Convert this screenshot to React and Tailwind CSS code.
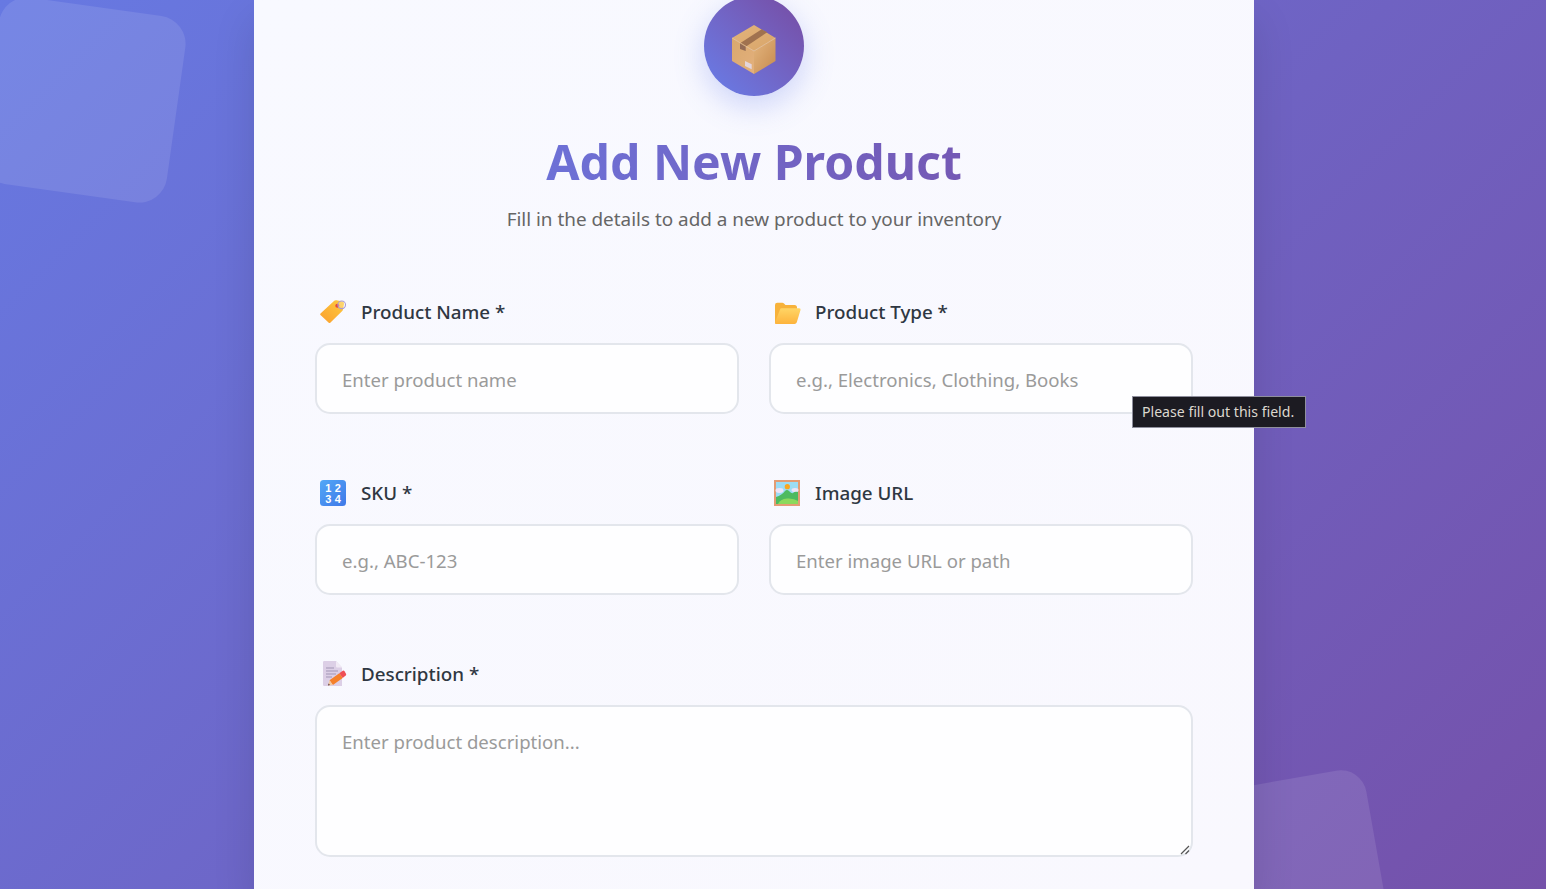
import React from "react";

const Tag = () => (
  <svg viewBox="0 0 28 28" className="w-7 h-7">
    <defs><linearGradient id="tg" x1="0" y1="1" x2="1" y2="0"><stop offset="0" stopColor="#fb9f2e"/><stop offset="1" stopColor="#fdcb3f"/></linearGradient></defs>
    <path d="M1.500 15.500 15 3q1-1 2.500-.7l6 1.200q1.800.4 1.500 2.500l-1 5.500q-.2 1-1 1.800L11.500 24.500q-1 1-2 0L1.500 17q-.8-.8 0-1.500Z" fill="url(#tg)"/>
    <circle cx="18.300" cy="7.700" r="2" fill="#e5483a"/>
    <circle cx="22.700" cy="6.800" r="3.800" fill="#fff" fillOpacity=".25" stroke="#a99ad2" strokeWidth="1.100"/>
  </svg>
);
const Folder = () => (
  <svg viewBox="0 0 28 28" className="w-7 h-7">
    <defs><linearGradient id="fd" x1="0" y1="0" x2="0" y2="1"><stop offset="0" stopColor="#ffd565"/><stop offset="1" stopColor="#fdb33c"/></linearGradient></defs>
    <path d="M2 7q0-2.300 2.300-2.300h5q1 0 1.700.8l1.500 1.500h9q2.500 0 2.500 2.500v3H2Z" fill="#f7b23b"/>
    <path d="M2 8h6v18H3.500Q2 26 2 24.500Z" fill="#f7b23b"/>
    <path d="M7 11.500q.3-1.200 1.500-1.200h17.700q1.800 0 1.300 1.700l-3.700 12.200q-.5 1.800-2.300 1.800H3.500q-2 0-1.400-1.800Z" fill="url(#fd)"/>
  </svg>
);
const Keycap = () => (
  <svg viewBox="0 0 28 28" className="w-7 h-7">
    <defs><linearGradient id="kc" x1="0" y1="0" x2="1" y2="1"><stop offset="0" stopColor="#52a8f7"/><stop offset="1" stopColor="#3f78e8"/></linearGradient></defs>
    <rect x="1" y="1" width="26" height="26" rx="3.500" fill="url(#kc)"/>
    <g fill="#fff" fontFamily="'Liberation Sans', sans-serif" fontSize="11" fontWeight="700" textAnchor="middle">
      <text x="9.300" y="12.800">1</text><text x="18.700" y="12.800">2</text>
      <text x="9.300" y="23.800">3</text><text x="18.700" y="23.800">4</text>
    </g>
  </svg>
);
const Picture = () => (
  <svg viewBox="0 0 28 28" className="w-7 h-7">
    <rect x="1" y="1" width="26" height="26" fill="#e39c74"/>
    <rect x="3" y="3" width="22" height="22" fill="#9bdcf5"/>
    <ellipse cx="6.500" cy="11.500" rx="4" ry="2.400" fill="#eee3f7"/>
    <ellipse cx="22" cy="11" rx="3.500" ry="2" fill="#eee3f7"/>
    <circle cx="14.300" cy="7.700" r="2.600" fill="#f9a61f"/>
    <path d="M3 18q6-2 9-6 2-2 4 0 3 3 4 2 2-2 5-1v12H3Z" fill="#4dba60"/>
    <path d="M5 25q2-5 9-5.500 7-.5 11 2.500v3Z" fill="#8bd95c"/>
  </svg>
);
const Memo = () => (
  <svg viewBox="0 0 28 28" className="w-7 h-7">
    <path d="M4 2.200Q4 1 5.200 1H17l6 6.500V26H5.200Q4 26 4 24.800Z" fill="#dccfe6"/>
    <path d="M17 1l6 6.500h-5q-1 0-1-1Z" fill="#f1eaf5"/>
    <path d="M7 8h8M7 11h12M7 14h10M7 17h6" stroke="#a195b5" strokeWidth="1"/>
    <path d="M10.500 20.300 20.300 13.300 23.700 18.100 13.900 25.100Z" fill="#f5802a"/>
    <path d="M20.300 13.300 23.800 10.800Q24.800 10.300 25.500 11.200L27 13.700Q27.500 14.800 26.700 15.600L23.700 18.100Z" fill="#ef4f55"/>
    <path d="M9 25.500 10.500 20.300 13.900 25.100Z" fill="#f3c9a0"/>
    <path d="M9 25.500 9.600 23.400 11 25.100Z" fill="#5b3a3a"/>
  </svg>
);
const Box = () => (
  <svg viewBox="0 0 48 52" className="w-12 h-[52px] mt-2">
    <defs>
      <linearGradient id="bt" x1="0" y1="0" x2="1" y2="1"><stop offset="0" stopColor="#e2b47c"/><stop offset="1" stopColor="#d9a569"/></linearGradient>
      <linearGradient id="bl" x1="0" y1="0" x2="1" y2="1"><stop offset="0" stopColor="#d9a86e"/><stop offset="1" stopColor="#e3b07c"/></linearGradient>
      <linearGradient id="br" x1="0" y1="0" x2="1" y2="1"><stop offset="0" stopColor="#e4b67f"/><stop offset="1" stopColor="#c68a4e"/></linearGradient>
    </defs>
    <path d="M24 1 45.500 14 24 27 2 14Z" fill="url(#bt)"/>
    <path d="M2 14 24 27V50L2 37Z" fill="url(#bl)"/>
    <path d="M45.500 14 24 27V50L45.500 37Z" fill="url(#br)"/>
    <path d="M10 19.300 31.700 5.300 37.300 8.300 15.700 22.700Z" fill="#a0724f"/>
    <path d="M10 19.300 15.700 22.700V27L10 25Z" fill="#936b55"/>
    <path d="M15 37 21.700 40.300V45.300L15 42Z" fill="#e3d5dc"/>
    <path d="M2 14 24 27 45.500 14" fill="none" stroke="#f0cf9f" strokeWidth=".7"/>
  </svg>
);

const Label = ({ icon, text }) => (
  <label className="flex items-center h-7 mb-[17px] text-[18.800px] font-medium text-[#2f3742]">
    <span className="w-[46px] pl-1 shrink-0 flex">{icon}</span>
    {text}
  </label>
);

const field = "block w-full border-2 border-[#e3e6ec] rounded-[15px] bg-white/80 px-[25px] text-[18.600px] text-[#333] placeholder:text-[#9a9a9a] outline-none";

export default function App() {
  return (
    <div className="relative h-[889px] overflow-hidden bg-[linear-gradient(135deg,#6779e2_0%,#7551aa_100%)] font-['Noto_Sans','Open_Sans',sans-serif]">
      <div className="absolute left-[-11px] top-[6px] w-[188px] h-[188px] rounded-[28px] rotate-[8deg] bg-white/10" />
      <div className="absolute left-[1226px] top-[778px] w-[150px] h-[150px] rounded-[26px] -rotate-[10deg] bg-white/10" />

      <main className="relative ml-[254px] w-[1000px] h-[889px] px-[61px] bg-linear-to-br from-[#f8f9ff] to-[#f9f8fe] shadow-[0_20px_40px_rgba(0,0,0,0.12)]">
        <div className="flex flex-col items-center">
          <div className="mt-[-4px] w-[100px] h-[100px] rounded-full bg-linear-to-tr from-[#667eea] to-[#764ba2] shadow-[0_10px_30px_rgba(102,126,234,0.3)] flex items-center justify-center">
            <Box />
          </div>
          <h1 className="mt-[36px] mb-px w-full text-center h-[58px] leading-[58px] text-[48.200px] font-bold bg-linear-to-r from-[#667eea] to-[#764ba2] bg-clip-text text-transparent">Add New Product</h1>
          <p className="mt-[14px] h-7 leading-7 text-[18.900px] text-[#666]">Fill in the details to add a new product to your inventory</p>
        </div>

        <form className="mt-[65px] grid grid-cols-2 gap-x-[30px] gap-y-[65px]">
          <div>
            <Label icon={<Tag />} text="Product Name *" />
            <input className={`${field} h-[71px] pt-[2px]`} placeholder="Enter product name" />
          </div>
          <div>
            <Label icon={<Folder />} text="Product Type *" />
            <input className={`${field} h-[71px] pt-[2px]`} placeholder="e.g., Electronics, Clothing, Books" />
          </div>
          <div>
            <Label icon={<Keycap />} text="SKU *" />
            <input className={`${field} h-[71px] pt-[2px]`} placeholder="e.g., ABC-123" />
          </div>
          <div>
            <Label icon={<Picture />} text="Image URL" />
            <input className={`${field} h-[71px] pt-[2px]`} placeholder="Enter image URL or path" />
          </div>
          <div className="col-span-2 relative">
            <Label icon={<Memo />} text="Description *" />
            <textarea className={`${field} h-[152px] pt-[19px] leading-[32px] resize-none`} placeholder="Enter product description..." />
            <svg viewBox="0 0 10 10" className="absolute right-[3px] bottom-[2px] w-[10px] h-[10px]">
              <path d="M1 9 9 1M5.500 9 9 5.500" stroke="#555" strokeWidth="1.200" fill="none"/>
            </svg>
          </div>
        </form>
      </main>

      <div className="absolute left-[1132px] top-[396px] w-[174px] h-[32px] flex items-center pl-[9px] bg-[#1c1b22] border border-[#8f8f9d] text-[14.100px] text-[#dcd8cf]">Please fill out this field.</div>
    </div>
  );
}
